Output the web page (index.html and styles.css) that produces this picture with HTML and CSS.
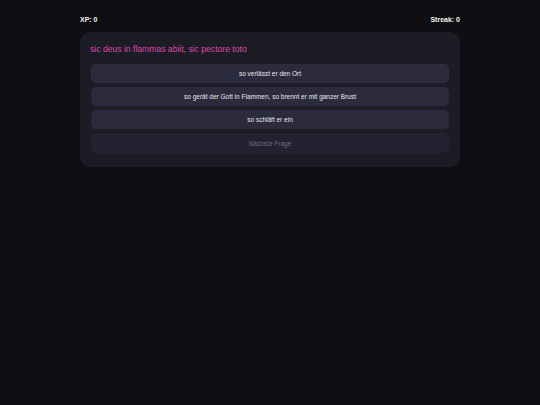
FILE: index.html
```html
<!DOCTYPE html>
<html lang="de">
<head>
<meta charset="utf-8">
<title>Quiz</title>
<link rel="stylesheet" href="styles.css">
</head>
<body>
<div class="app">
  <header class="stats">
    <span class="stat">XP: 0</span>
    <span class="stat">Streak: 0</span>
  </header>
  <main class="card">
    <h2 class="question">sic deus in flammas abiit, sic pectore toto</h2>
    <div class="options">
      <button class="option">so verlässt er den Ort</button>
      <button class="option">so gerät der Gott in Flammen, so brennt er mit ganzer Brust</button>
      <button class="option">so schläft er ein</button>
      <button class="option next" disabled>Nächste Frage</button>
    </div>
  </main>
</div>
</body>
</html>
```
FILE: styles.css
```css
* { box-sizing: border-box; }
html, body {
  margin: 0;
  padding: 0;
  background: #0f0f13;
  font-family: "Liberation Sans", Arial, sans-serif;
  color: #e8e8ee;
}
.app {
  width: 380px;
  margin: 0 auto;
  padding-top: 15px;
}
.stats {
  display: flex;
  justify-content: space-between;
  height: 9px;
  margin-bottom: 8px;
}
.stat {
  font-size: 7px;
  font-weight: bold;
  line-height: 9px;
  color: #f2f2f2;
}
.card {
  background: #1c1c26;
  border-radius: 10px;
  padding: 11px 11px 14px 10px;
}
.question {
  margin: 0 0 9px;
  font-size: 8.6px;
  font-weight: normal;
  line-height: 12px;
  color: #de45aa;
}
.options {
  display: flex;
  flex-direction: column;
  gap: 4px;
  padding-left: 1px;
}
.option {
  height: 19px;
  border: none;
  border-radius: 5px;
  background: #2c2b3d;
  color: #e6e6ee;
  font-family: inherit;
  font-size: 6.5px;
  padding: 0;
}
.option.next {
  background: #232231;
  color: #6e6d80;
  height: 20px;
}
```
